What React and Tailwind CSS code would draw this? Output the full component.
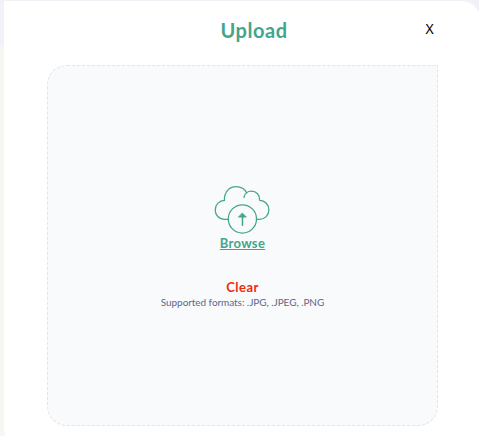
function CloudUploadIcon() {
  return (
    <svg className="mr-0.5 block h-[50px] w-[56px]" viewBox="0 0 56 50" fill="none" stroke="#44a58a" strokeWidth="1.25" strokeLinecap="round" strokeLinejoin="round">
      <path d="M14.3 34.3H10.7C5 34.3 1.2 30 1.2 24.9C1.2 19.4 5.5 15.5 10.5 15.4C9.8 7.5 15.2 1.6 22 1.6C27 1.6 31 4.2 32.8 8" />
      <path d="M30 12.5C30.5 8.7 33.6 6.2 37.4 6.2C42.3 6.2 46 10 45.7 15.4C51 15.6 54.9 19.7 54.9 24.9C54.9 30.2 50.8 34.3 45.5 34.3H42.7" />
      <circle cx="28.4" cy="33.9" r="14.1" />
      <path d="M28.5 40.2V30" strokeWidth="1.5" />
      <path d="M28.5 28.2L32.3 32.1H24.7Z" fill="#44a58a" strokeWidth="0.8" />
    </svg>
  );
}

export default function App() {
  return (
    <div className="h-[436px] w-[479px] overflow-hidden bg-linear-to-b from-[#f1f2f9] from-10% to-[#f7f6f2] to-11% pt-px pl-1 font-['Lato',sans-serif]">
      <div className="h-[447px] w-[477px] rounded-[20px] rounded-tl-none bg-white pl-[43px]">
        <header className="flex h-16 w-[391px] items-start">
          <div className="w-5" />
          <h1 className="flex-1 pt-[15px] pl-[23px] text-center text-[20px] leading-7 font-bold tracking-[0.55px] text-[#44a58a]">Upload</h1>
          <button className="w-5 pt-[18px] pl-[3px] text-center font-['Noto_Sans',sans-serif] text-[14px] leading-5 text-black">X</button>
        </header>
        <main className="flex h-[361px] w-[391px] flex-col items-center rounded-[20px] rounded-tr-none border border-dashed border-[#e2e4e6] bg-[#f9fafc] pt-[119px]">
          <CloudUploadIcon />
          <button className="-mt-px text-[13px] leading-[18px] font-bold tracking-[0.3px] text-[#44a58a] underline decoration-1 underline-offset-1">Browse</button>
          <button className="mt-[26px] text-[13px] leading-[18px] font-bold tracking-[0.5px] text-[#ed2b0c]">Clear</button>
          <p className="text-[10px] leading-3 tracking-[-0.06px] text-[#5f668a]">Supported formats: .JPG, .JPEG, .PNG</p>
        </main>
      </div>
    </div>
  );
}
